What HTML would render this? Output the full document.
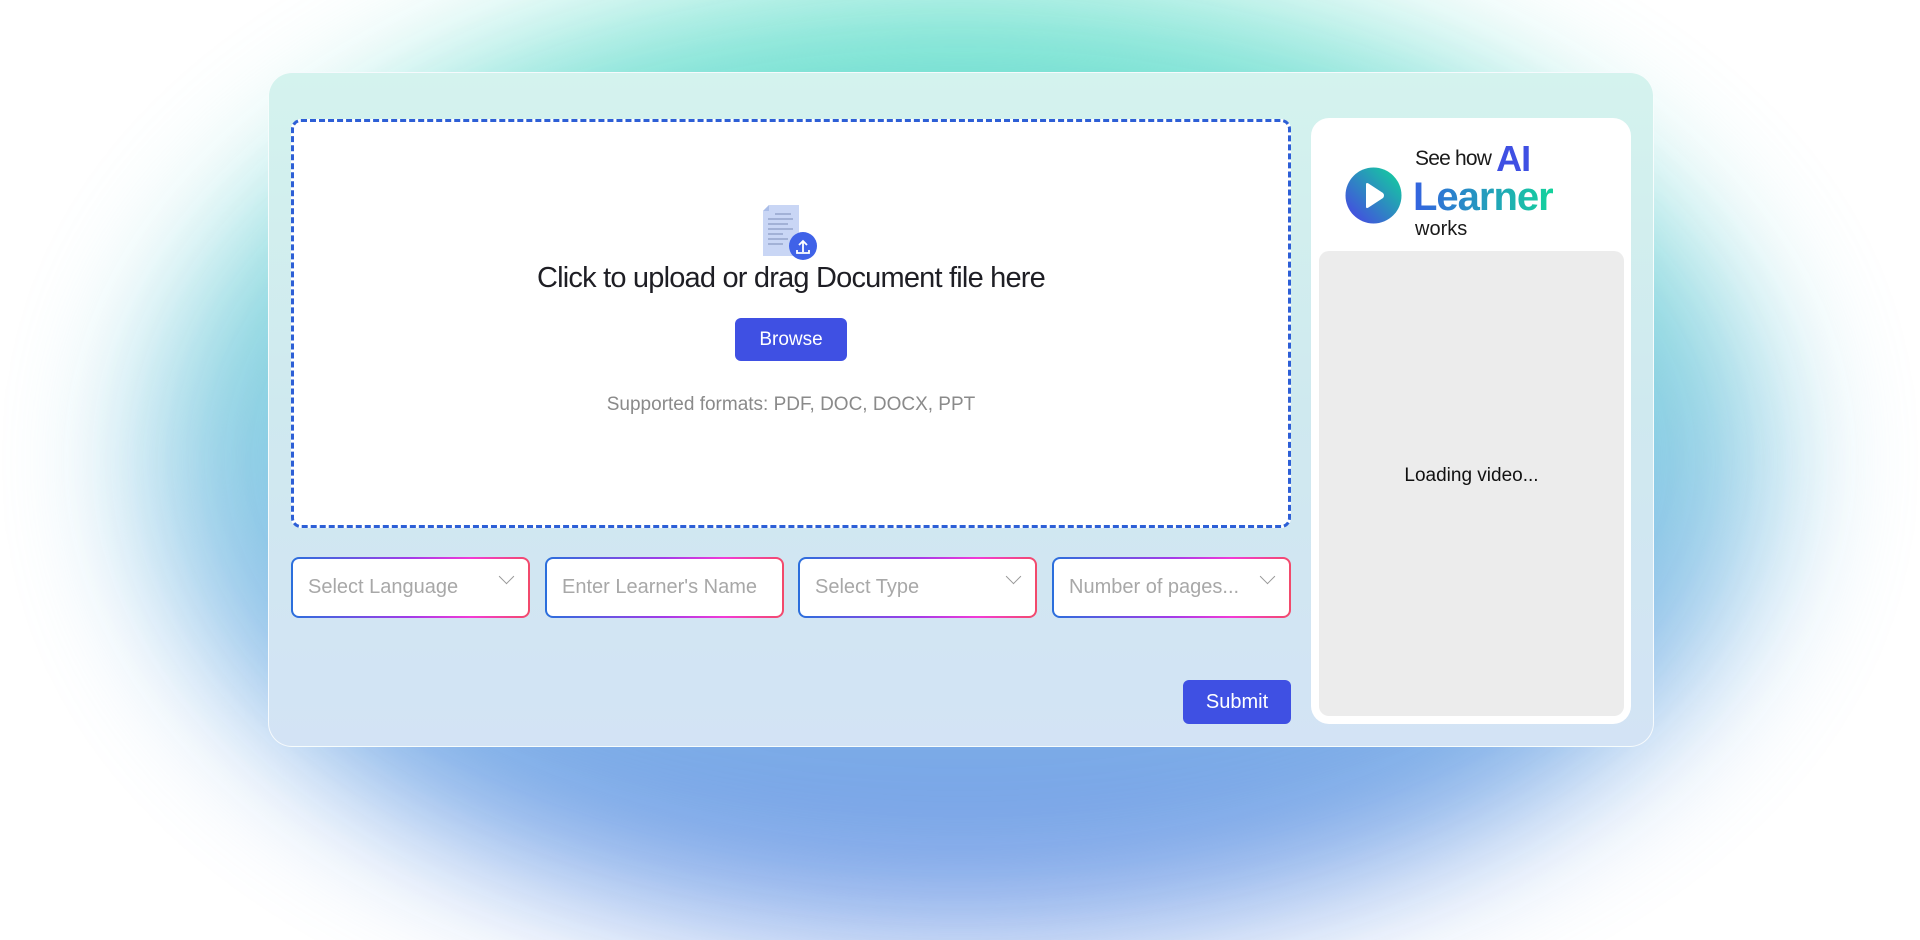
<!DOCTYPE html>
<html><head><meta charset="utf-8"><style>
*{box-sizing:border-box;margin:0;padding:0}
body{width:1920px;height:887px;overflow:hidden;background:#fff;font-family:"Liberation Sans",sans-serif;position:relative}
.glow{position:absolute;left:150px;top:-20px;width:1620px;height:960px;border-radius:50%;
background:linear-gradient(180deg,#5fe3c8 0%,#7ed2dc 35%,#83c0e6 60%,#6f9fe6 85%,#7a9ee8 100%);filter:blur(70px);opacity:.95}
.card{position:absolute;left:268px;top:72px;width:1386px;height:675px;border-radius:24px;
background:linear-gradient(180deg,#d4f3ee 0%,#cfe9ef 50%,#d3e3f5 100%);border:1px solid rgba(255,255,255,.8)}
.drop{position:absolute;left:291px;top:119px;width:1000px;height:409px;background:#fff;border:3px dashed #2d5fd6;border-radius:10px}
.t1{position:absolute;left:0;width:100%;text-align:center;top:139px;font-size:29px;line-height:34px;color:#1e1e24;letter-spacing:-.8px}
.browse{position:absolute;left:735px;top:318px;width:112px;height:43px;background:#3f50e3;color:#fff;border-radius:6px;font-size:19px;text-align:center;line-height:43px}
.sup{position:absolute;left:0;width:100%;text-align:center;top:272px;font-size:19px;line-height:22px;color:#8a8a8a}
.inp{position:absolute;top:557px;height:61px;width:239px;border-radius:8px;padding:2px;
background:linear-gradient(90deg,#2a6fdc,#a33be8 50%,#f23ad6 75%,#f24a6a)}
.inp div{background:#fff;border-radius:6px;height:100%;font-size:20px;color:#a8a8a8;padding-left:15px;line-height:57px;position:relative}
.chev{position:absolute;right:16px;top:12px;width:11px;height:11px;border-right:1.5px solid #999;border-bottom:1.5px solid #999;transform:rotate(45deg)}
.submit{position:absolute;left:1183px;top:680px;width:108px;height:44px;background:#3f50e3;border-radius:6px;color:#fff;font-size:20px;text-align:center;line-height:44px}
.rc{position:absolute;left:1311px;top:118px;width:320px;height:606px;background:#fff;border-radius:18px}
.vid{position:absolute;left:1319px;top:251px;width:305px;height:465px;background:#ececec;border-radius:10px;text-align:center;line-height:450px;font-size:19px;color:#111}
</style></head><body>
<div class="glow"></div>
<div class="card"></div>
<div class="drop">
<div class="t1">Click to upload or drag Document file here</div>
<div class="sup">Supported formats: PDF, DOC, DOCX, PPT</div>
</div>
<svg style="position:absolute;left:763px;top:205px" width="56" height="58" viewBox="0 0 56 58">
<path d="M6 0h30v51H0V6z" fill="#c9d6f5"/><path d="M6 0v6H0z" fill="#aabde8"/>
<g stroke="#8c9bc4" stroke-width="1.3"><path d="M12 9h16M5 14h25M5 19h20M5 24h25M5 29h15M5 34h20M5 39h15"/></g>
<circle cx="40" cy="41" r="14" fill="#3f62e8"/>
<path d="M40 47v-10M36 40l4-4 4 4M34 45v3h12v-3" stroke="#fff" stroke-width="1.8" fill="none"/>
</svg>
<div class="browse">Browse</div>
<div class="inp" style="left:291px"><div>Select Language<span class="chev"></span></div></div>
<div class="inp" style="left:545px"><div>Enter Learner's Name</div></div>
<div class="inp" style="left:798px"><div>Select Type<span class="chev"></span></div></div>
<div class="inp" style="left:1052px"><div>Number of pages...<span class="chev"></span></div></div>
<div class="submit">Submit</div>
<div class="rc"></div>
<svg style="position:absolute;left:1345px;top:167px" width="57" height="57" viewBox="0 0 57 57">
<defs><linearGradient id="g" x1="1" y1="0" x2="0" y2="1"><stop offset="0" stop-color="#10d79a"/><stop offset="1" stop-color="#4a3de8"/></linearGradient></defs>
<circle cx="28.5" cy="28.5" r="28" fill="url(#g)"/>
<path d="M21 17.5Q21 15 23.5 16.5L38 26Q40 28.5 38 31L23.5 40.5Q21 42 21 39.5Z" fill="#fff"/>
</svg>
<div style="position:absolute;left:1415px;top:141px;height:36px;line-height:36px;font-size:21px;color:#1a1a1a;letter-spacing:-.8px;white-space:nowrap">See how <b style="font-size:36px;color:#3f50e3;letter-spacing:-1px;vertical-align:top;line-height:36px">AI</b></div>
<div style="position:absolute;left:1413px;top:176px;line-height:42px;font-size:40px;font-weight:bold;letter-spacing:-1px;background:linear-gradient(90deg,#3462e0,#14d39c);-webkit-background-clip:text;background-clip:text;color:transparent">Learner</div>
<div style="position:absolute;left:1415px;top:218px;line-height:22px;font-size:20px;color:#1a1a1a">works</div>
<div class="vid">Loading video...</div>
</body></html>
